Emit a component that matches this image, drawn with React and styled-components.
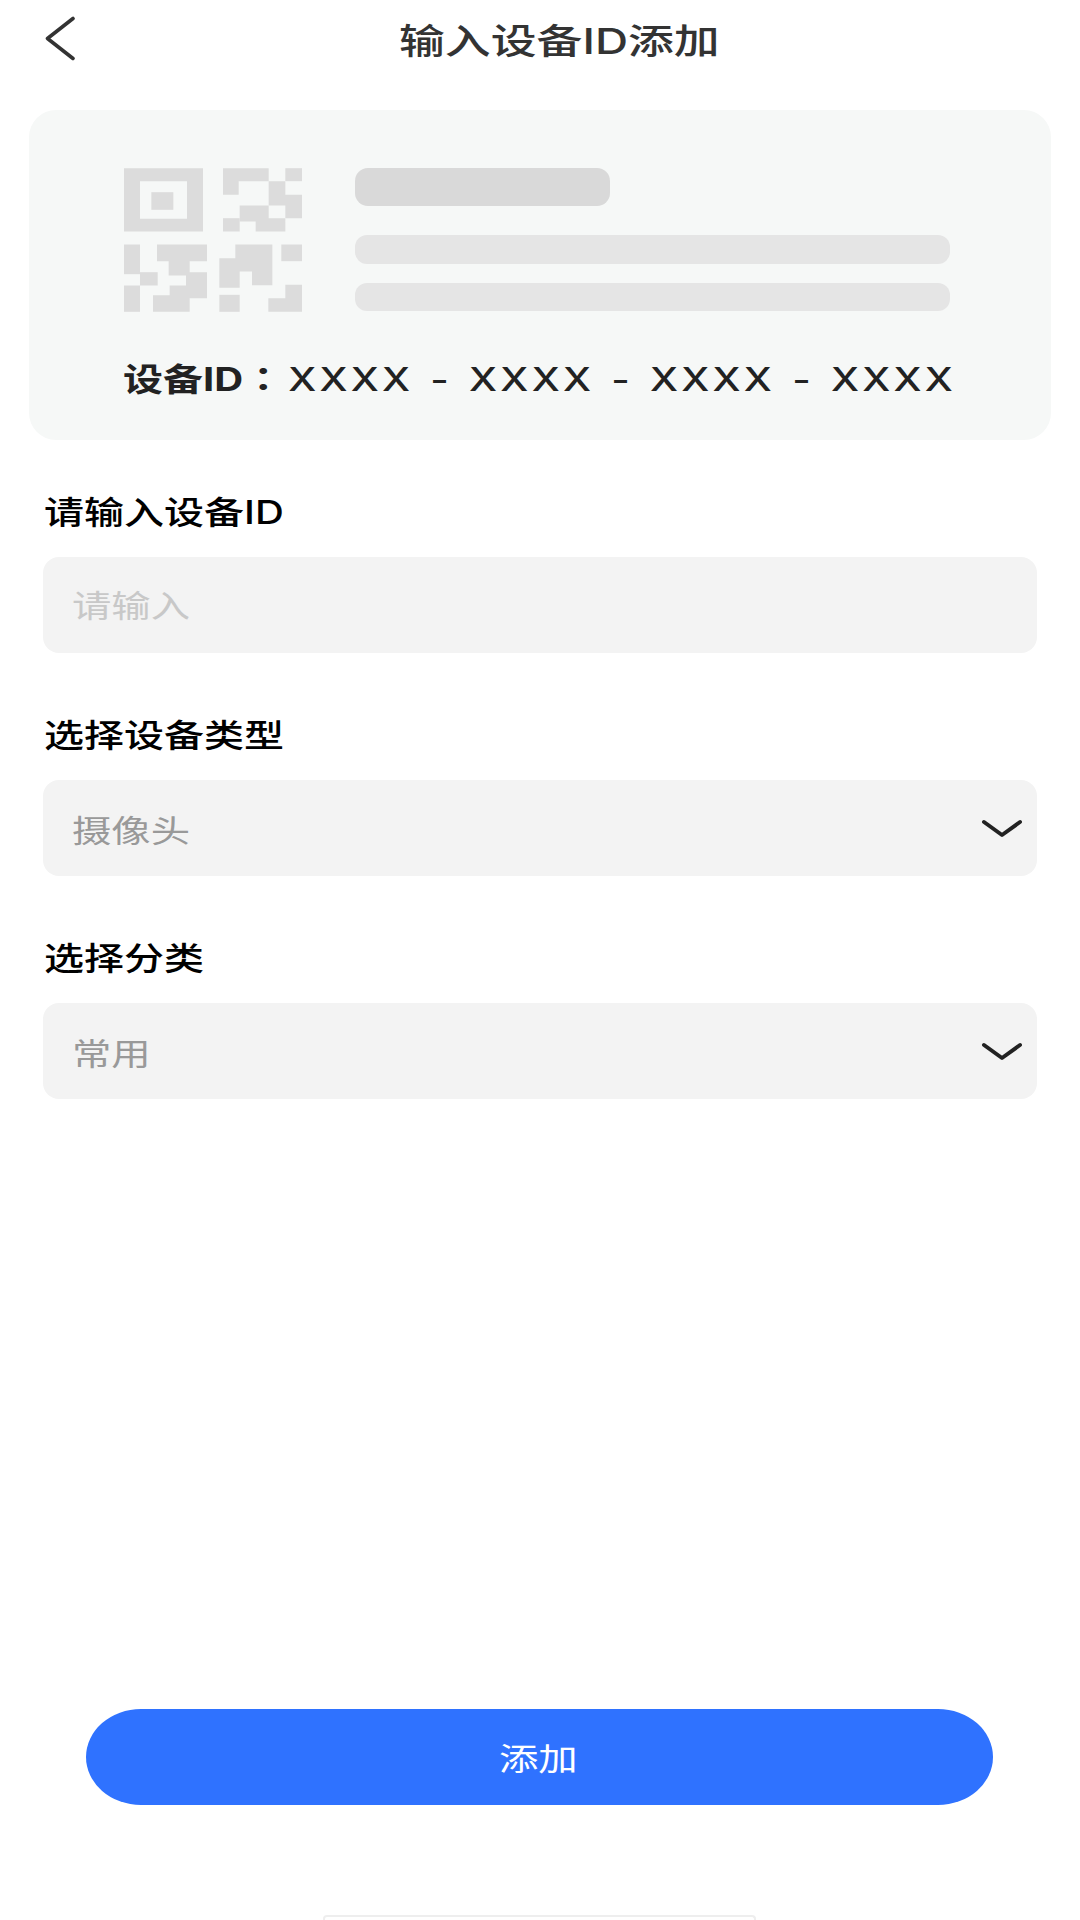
import React from 'react';
import styled, { createGlobalStyle } from 'styled-components';

const GlobalStyle = createGlobalStyle`
  html, body {
    margin: 0;
    padding: 0;
    background: #fff;
  }
  * {
    box-sizing: border-box;
  }
`;

const Page = styled.div`
  width: 1080px;
  height: 1920px;
  overflow: hidden;
  display: flex;
  flex-direction: column;
  background: #fff;
  font-family: 'Inter', 'Noto Sans CJK SC', sans-serif;
`;

// the whole screen is stretched sideways, so text gets a horizontal scale
const Wide = styled.span`
  display: inline-block;
  white-space: nowrap;
  transform: scaleX(${(props) => props.$scale || 1.27});
  transform-origin: left center;
`;

const Header = styled.header`
  height: 110px;
  flex-shrink: 0;
  display: flex;
  align-items: flex-start;
  padding-left: 45px;
`;

const BackIcon = styled.svg`
  width: 32px;
  height: 46px;
  margin-top: 16px;
  flex-shrink: 0;
`;

const Title = styled.h1`
  margin: 21px 0 0 322px;
  font-size: 35px;
  line-height: 40px;
  font-weight: 500;
  color: #333;
`;

const Card = styled.section`
  width: 1022px;
  height: 330px;
  margin-left: 29px;
  padding: 58px 0 0 95px;
  flex-shrink: 0;
  background: #f6f8f7;
  border-radius: 27px;
`;

const Preview = styled.div`
  display: flex;
  gap: 53px;
`;

const QrCode = styled.svg`
  width: 178px;
  height: 144px;
  flex-shrink: 0;
`;

const Lines = styled.div`
  width: 595px;
  display: flex;
  flex-direction: column;
`;

const HeadLine = styled.div`
  width: 255px;
  height: 38px;
  margin-bottom: 29px;
  border-radius: 13px;
  background: #d9d9d9;
`;

const TextLine = styled.div`
  height: 28.5px;
  margin-bottom: 19px;
  border-radius: 12px;
  background: #e5e5e5;
`;

const DeviceId = styled.div`
  margin: 26px 0 0 -1px;
  font-size: 32px;
  line-height: 42px;
  color: #222;
`;

const DeviceIdName = styled.b`
  font-weight: 700;
`;

const Colon = styled.b`
  font-family: 'Noto Sans CJK TC', sans-serif;
  font-weight: 700;
`;

const Mask = styled.span`
  margin-left: 4px;
  letter-spacing: 2.6px;
  word-spacing: 2.5px;
  font-weight: 500;
`;

const Form = styled.form`
  width: 994px;
  margin: 52px 0 0 43px;
  display: flex;
  flex-direction: column;
  gap: 62px;
`;

const Group = styled.div`
  display: flex;
  flex-direction: column;
  gap: 25px;
`;

const Label = styled.label`
  height: 40px;
  padding: 1px 0 0 1px;
  font-size: 32px;
  line-height: 40px;
  font-weight: 500;
  color: #000;
`;

const Field = styled.div`
  height: 96px;
  padding: ${(props) => (props.$placeholder ? '0 14px 4px 29px' : '0 14px 0 29px')};
  display: flex;
  align-items: center;
  justify-content: space-between;
  border-radius: 16px;
  background: #f3f3f3;
  font-size: 31px;
  color: ${(props) => (props.$placeholder ? '#c8c8c8' : '#999')};
`;

const Chevron = styled.svg`
  width: 42px;
  height: 20px;
  margin-top: 2px;
  flex-shrink: 0;
`;

const AddButton = styled.button`
  width: 907px;
  height: 96px;
  margin: auto 0 110px 86px;
  flex-shrink: 0;
  border: none;
  padding: 0 0 2px 413px;
  display: flex;
  align-items: center;
  border-radius: 55px / 48px;
  background: #2f72ff;
  color: #fff;
  font-family: inherit;
  font-size: 31px;
`;

const HomeBar = styled.div`
  width: 433px;
  height: 5px;
  margin-left: 323px;
  flex-shrink: 0;
  border: 2px solid #eee;
  border-bottom: none;
  border-radius: 4px 4px 0 0;
`;

const qrShapes = [
  'M71 53H308V243H71ZM119 92V205H260V92Z',
  'M153 125H219V178H153Z',
  'M368 53H505V92H415V133H368Z',
  'M555 53H605V92H555Z',
  'M505 92H555V133H605V203H555V165H505Z',
  'M418 165H505V203H555V243H466V213H418Z',
  'M368 203H418V243H368Z',
  'M71 282H119V371H71Z',
  'M119 365H172V405H119Z',
  'M71 405H119V484H71Z',
  'M170 282H320V332H268V375H205V332H170Z',
  'M257 365H320V443H268V484H158V434H208V405H257Z',
  'M405 282H516V404H455V363H418V412H357V323H405Z',
  'M543 282H605V332H543Z',
  'M357 433H418V484H357Z',
  'M555 403H605V484H504V443H555Z',
];

function DownArrow() {
  return (
    <Chevron viewBox="0 0 42 20" fill="none">
      <path d="M3 3L21 16L39 3" stroke="#222" strokeWidth="4" strokeLinecap="round" strokeLinejoin="round" />
    </Chevron>
  );
}

export default function App() {
  return (
    <Page>
      <GlobalStyle />
      <Header>
        <BackIcon viewBox="0 0 32 46" fill="none">
          <path d="M28 2.5L2.5 22.5L28 42.5" stroke="#333" strokeWidth="3.6" strokeLinecap="round" strokeLinejoin="round" />
        </BackIcon>
        <Title>
          <Wide $scale={1.31}>输入设备ID添加</Wide>
        </Title>
      </Header>

      <Card>
        <Preview>
          <QrCode viewBox="71 53 534 431" fill="#dcdcdc">
            {qrShapes.map((d) => (
              <path key={d} d={d} fillRule="evenodd" />
            ))}
          </QrCode>
          <Lines>
            <HeadLine />
            <TextLine />
            <TextLine />
          </Lines>
        </Preview>
        <DeviceId>
          <Wide $scale={1.25}>
            <DeviceIdName>设备ID</DeviceIdName>
            <Colon>：</Colon>
            <Mask>XXXX - XXXX - XXXX - XXXX</Mask>
          </Wide>
        </DeviceId>
      </Card>

      <Form>
        <Group>
          <Label>
            <Wide $scale={1.25}>请输入设备ID</Wide>
          </Label>
          <Field $placeholder>
            <Wide>请输入</Wide>
          </Field>
        </Group>
        <Group>
          <Label>
            <Wide $scale={1.25}>选择设备类型</Wide>
          </Label>
          <Field>
            <Wide>摄像头</Wide>
            <DownArrow />
          </Field>
        </Group>
        <Group>
          <Label>
            <Wide $scale={1.25}>选择分类</Wide>
          </Label>
          <Field>
            <Wide>常用</Wide>
            <DownArrow />
          </Field>
        </Group>
      </Form>

      <AddButton type="button">
        <Wide>添加</Wide>
      </AddButton>
      <HomeBar />
    </Page>
  );
}
